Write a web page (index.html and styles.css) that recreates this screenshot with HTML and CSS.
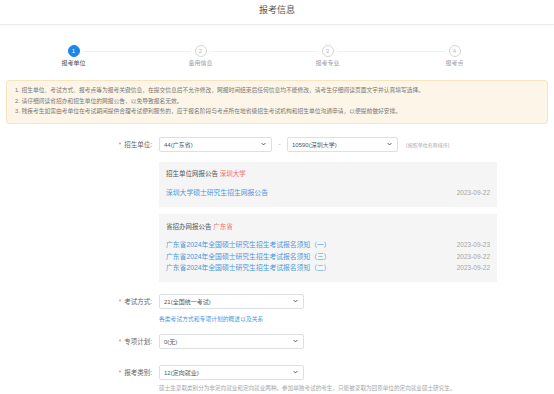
FILE: index.html
```html
<!DOCTYPE html>
<html lang="zh-CN">
<head>
  <meta charset="UTF-8">
  <title>报考信息</title>
  <link rel="stylesheet" href="styles.css">
</head>
<body>
  <header class="top">
    <h1>报考信息</h1>
  </header>

  <!-- 步骤条 -->
  <ol class="steps">
    <li class="step active"><span class="step-num">1</span><span class="step-title">报考单位</span></li>
    <li class="step"><span class="step-num">2</span><span class="step-title">备用信息</span></li>
    <li class="step"><span class="step-num">3</span><span class="step-title">报考专业</span></li>
    <li class="step"><span class="step-num">4</span><span class="step-title">报考点</span></li>
  </ol>

  <div class="notice">
    <p>1. 招生单位、考试方式、报考点等为报考关键信息，在提交信息后不允许修改，网报时间结束后任何信息均不能修改，请考生仔细阅读页面文字并认真填写选择。</p>
    <p>2. 请仔细阅读省招办和招生单位的网报公告，以免导致报名无效。</p>
    <p>3. 残疾考生如需由考单位在考试期间提供合理考试便利服务的，应于报名阶段与考点所在地省级招生考试机构和招生单位沟通申请，以便提前做好安排。</p>
  </div>

  <form class="form">
    <div class="field field-unit">
      <label class="field-label"><i>*</i>招生单位:</label>
      <div class="field-body">
        <div class="select-row">
          <div class="select sel-prov"><span>44(广东省)</span><svg viewBox="0 0 8 5"><path d="M1 1l3 3 3-3"/></svg></div>
          <span class="dash">-</span>
          <div class="select sel-unit"><span>10590(深圳大学)</span><svg viewBox="0 0 8 5"><path d="M1 1l3 3 3-3"/></svg></div>
          <span class="sort-hint">(按照单位名称排序)</span>
        </div>

        <div class="board board-unit">
          <div class="board-title">招生单位网报公告 <em>深圳大学</em></div>
          <ul class="board-list">
            <li><a href="#">深圳大学硕士研究生招生网报公告</a><span>2023-09-22</span></li>
          </ul>
        </div>

        <div class="board board-prov">
          <div class="board-title">省招办网报公告 <em>广东省</em></div>
          <ul class="board-list">
            <li><a href="#">广东省2024年全国硕士研究生招生考试报名须知（一）</a><span>2023-09-23</span></li>
            <li><a href="#">广东省2024年全国硕士研究生招生考试报名须知（三）</a><span>2023-09-22</span></li>
            <li><a href="#">广东省2024年全国硕士研究生招生考试报名须知（二）</a><span>2023-09-22</span></li>
          </ul>
        </div>
      </div>
    </div>

    <div class="field field-mode">
      <label class="field-label"><i>*</i>考试方式:</label>
      <div class="field-body">
        <div class="select sel-wide"><span>21(全国统一考试)</span><svg viewBox="0 0 8 5"><path d="M1 1l3 3 3-3"/></svg></div>
        <a class="field-link" href="#">各类考试方式和专项计划的概述以及关系</a>
      </div>
    </div>

    <div class="field field-plan">
      <label class="field-label"><i>*</i>专项计划:</label>
      <div class="field-body">
        <div class="select sel-wide"><span>0(无)</span><svg viewBox="0 0 8 5"><path d="M1 1l3 3 3-3"/></svg></div>
      </div>
    </div>

    <div class="field field-type">
      <label class="field-label"><i>*</i>报考类别:</label>
      <div class="field-body">
        <div class="select sel-wide"><span>12(定向就业)</span><svg viewBox="0 0 8 5"><path d="M1 1l3 3 3-3"/></svg></div>
        <p class="field-hint">硕士生录取类别分为非定向就业和定向就业两种。参加单独考试的考生，只能被录取为回原单位的定向就业硕士研究生。</p>
      </div>
    </div>
  </form>
</body>
</html>
```

FILE: styles.css
```css
:root {
  --blue: #1b87e6;
  --link: #4a98dc;
  --red: #f56c6c;
  --text: #333;
  --muted: #a6a6a6;
  --border: #dcdfe6;
}

* {
  margin: 0;
  padding: 0;
  box-sizing: border-box;
}

body {
  background: #fff;
  color: var(--text);
  font-family: "Liberation Sans", "Noto Sans CJK SC", sans-serif;
  font-size: 6px;
}

ul, ol {
  list-style: none;
}

a {
  color: var(--link);
  text-decoration: none;
}

/* 顶部标题 */
.top {
  height: 25px;
  border-bottom: 1px solid #ececec;
  box-shadow: 0 1px 2px rgba(0, 0, 0, 0.04);
}

.top h1 {
  font-size: 9px;
  font-weight: normal;
  line-height: 21px;
  text-align: center;
  color: #555;
}

/* 步骤条 */
.steps {
  display: flex;
  margin: 20px 0 0 10px;
}

.step {
  position: relative;
  width: 127px;
  display: flex;
  flex-direction: column;
  align-items: center;
}

.step:not(:last-child)::after {
  content: "";
  position: absolute;
  top: 6px;
  left: 73px;
  width: 108px;
  height: 1px;
  background: #f0f0f0;
}

.step-num {
  width: 12px;
  height: 12px;
  border-radius: 50%;
  border: 1px solid #d6d6d6;
  color: #bbb;
  font-size: 6px;
  line-height: 10px;
  text-align: center;
}

.step.active .step-num {
  background: var(--blue);
  border-color: var(--blue);
  color: #fff;
}

.step-title {
  margin-top: 2px;
  line-height: 8px;
  font-size: 6px;
  color: #a0a0a0;
}

.step.active .step-title {
  color: #555;
}

/* 提示框 */
.notice {
  margin: 13px 6px 0;
  padding: 4px 8px 6px;
  background: #fdf6e8;
  border: 1px solid #f8e4bd;
  border-radius: 3px;
  color: #777;
  font-size: 5.75px;
}

.notice p {
  line-height: 10.5px;
  white-space: nowrap;
}

/* 表单 */
.form {
  padding-bottom: 20px;
}

.field {
  display: flex;
  margin-top: 12px;
}

.field-unit {
  margin-top: 13px;
}

.field-plan {
  margin-top: 11px;
}

.field-type {
  margin-top: 16px;
}

.field-label {
  width: 152px;
  flex-shrink: 0;
  text-align: right;
  font-size: 6.5px;
  line-height: 15px;
  color: #666;
}

.field-label i {
  font-style: normal;
  color: var(--red);
  margin-right: 3px;
}

.field-body {
  margin-left: 7px;
}

.select-row {
  display: flex;
  align-items: center;
}

.select {
  height: 15px;
  display: flex;
  align-items: center;
  justify-content: space-between;
  padding: 0 5px 0 4px;
  border: 1px solid var(--border);
  border-radius: 2px;
  background: #fff;
  font-size: 6px;
  color: #555;
}

.select svg {
  width: 5px;
  height: 4px;
  fill: none;
  stroke: #444;
  stroke-width: 1.4;
}

.sel-prov {
  width: 113px;
}

.sel-unit {
  width: 111px;
}

.sel-wide {
  width: 145px;
}

.dash {
  width: 15px;
  text-align: center;
  color: #999;
}

.sort-hint {
  margin-left: 8px;
  font-size: 5px;
  color: var(--muted);
}

.board {
  width: 338px;
  background: #f5f5f5;
  padding: 8px 7px 10px;
}

.board-unit {
  margin-top: 10px;
}

.board-prov {
  margin-top: 7px;
  padding-top: 9px;
  padding-bottom: 8px;
}

.board-title {
  font-size: 6.5px;
  line-height: 8px;
  color: #555;
}

.board-title em {
  font-style: normal;
  color: var(--red);
}

.board-list li {
  display: flex;
  justify-content: space-between;
  font-size: 6.8px;
}

.board-unit .board-list {
  margin-top: 11px;
}

.board-unit .board-list li {
  line-height: 8px;
}

.board-prov .board-list {
  margin-top: 8.5px;
}

.board-prov .board-list li {
  line-height: 11.5px;
}

.board-list span {
  font-size: 6.5px;
  color: var(--muted);
}

.field-link {
  display: block;
  margin-top: 6px;
  line-height: 8px;
  font-size: 5.8px;
}

.field-hint {
  margin-top: 4px;
  line-height: 8px;
  font-size: 5.6px;
  color: var(--muted);
  white-space: nowrap;
}
```
